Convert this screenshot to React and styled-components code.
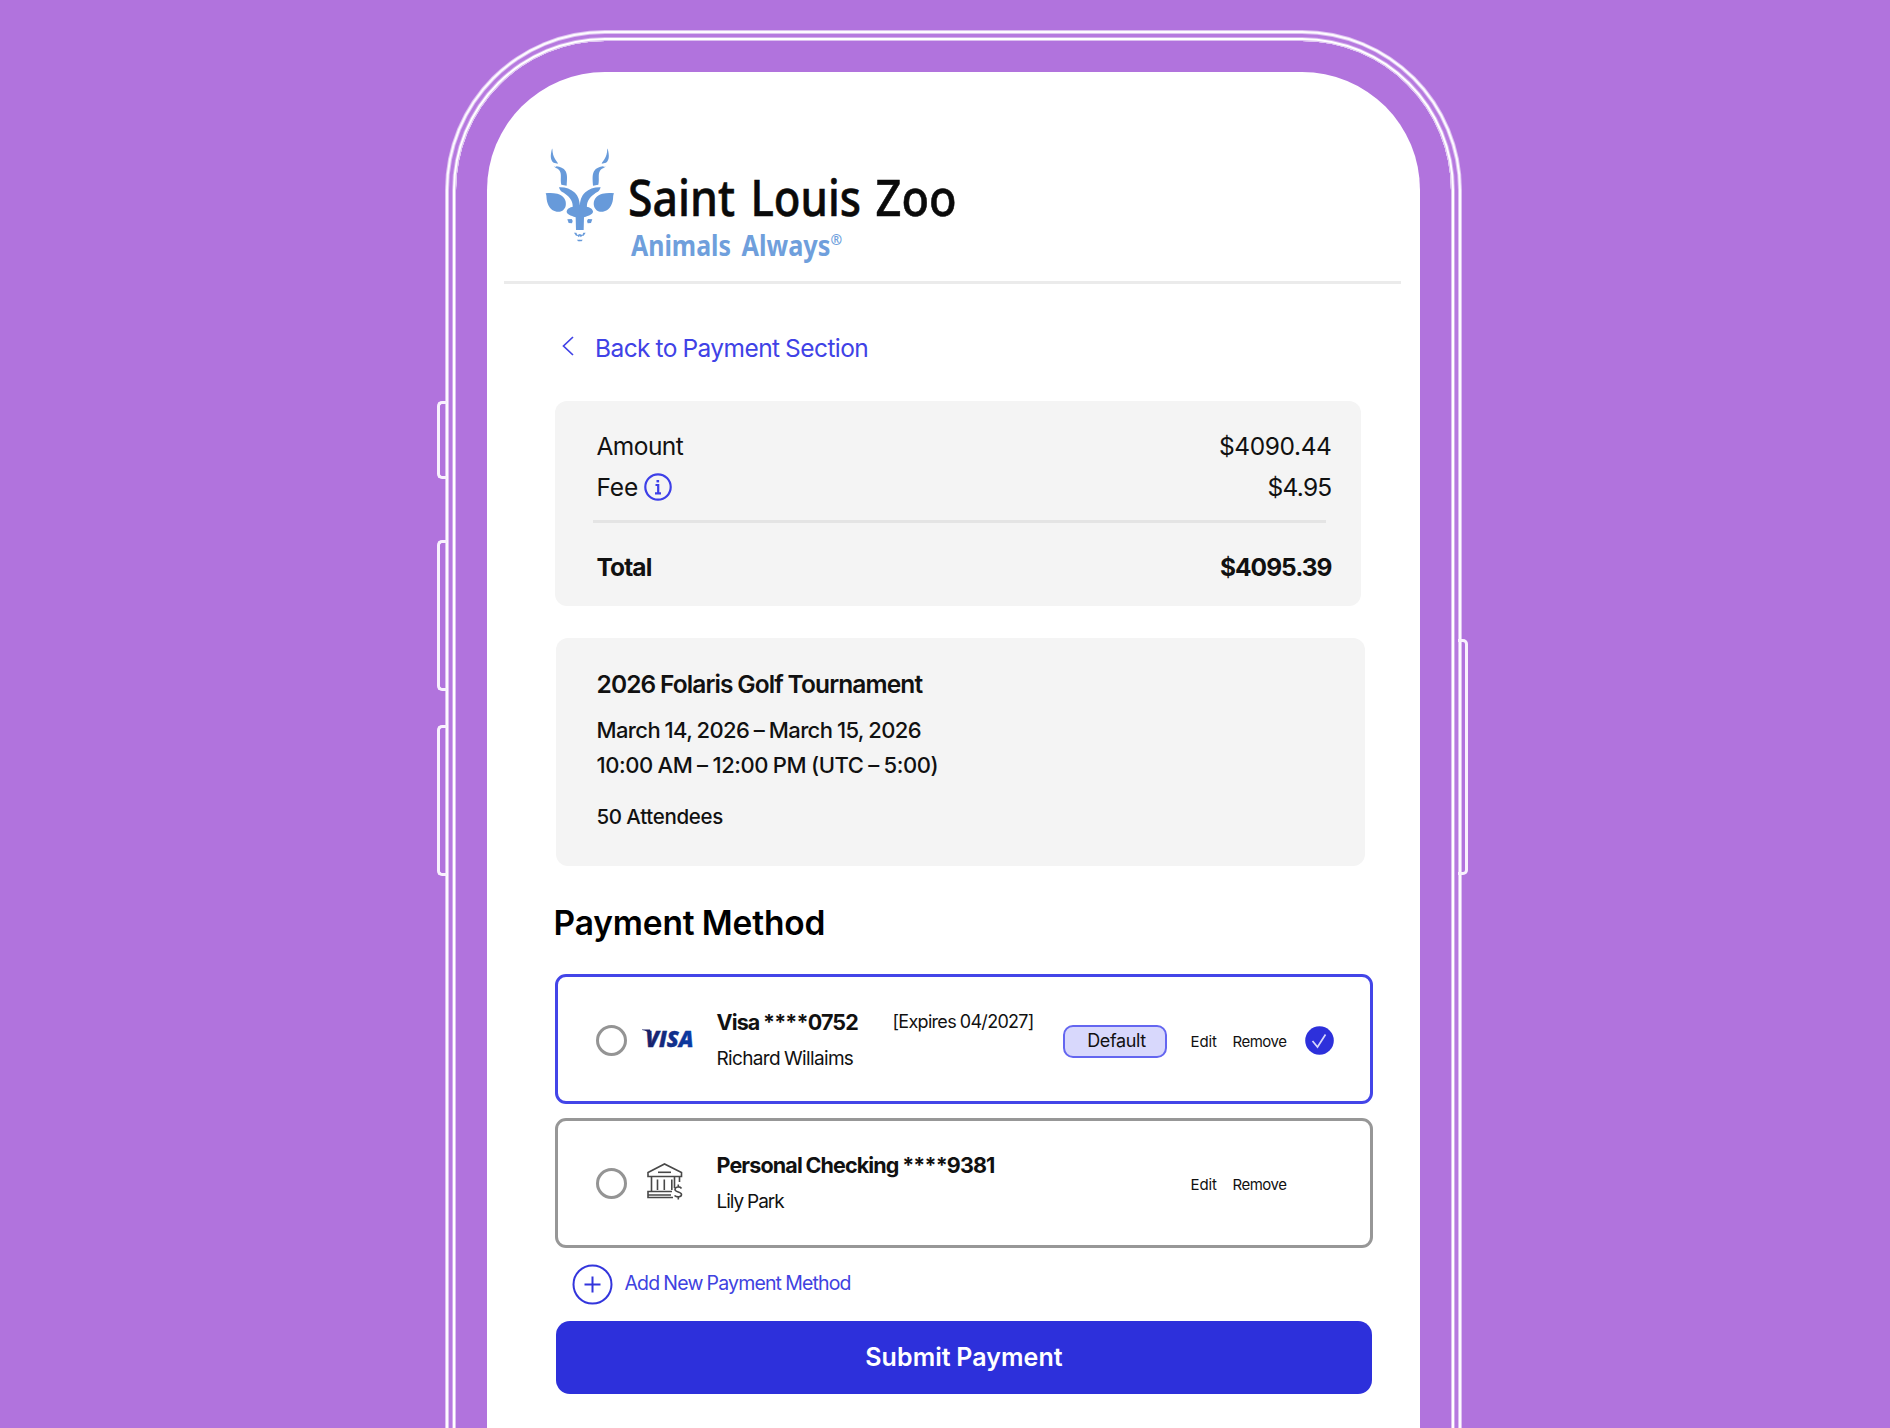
import React from "react"
import styled, { createGlobalStyle, css } from "styled-components"

const GlobalStyle = createGlobalStyle`
  * {
    box-sizing: border-box;
  }
  body {
    margin: 0;
    background: #b173dd;
    font-family: Inter, "Liberation Sans", sans-serif;
    color: #111;
  }
`
const Page = styled.div`
  height: 1428px;
  overflow: hidden;
  padding: 41px 0 0 456px;
`
const Device = styled.div`
  position: relative;
  width: 995px;
  height: 1387px;
  padding: 31px 31px 0 30.5px;
  border-radius: 149px 149px 0 0;
  box-shadow: 0 0 0 1px #dcc0f0, 0 0 0 3px #fff, 0 0 0 4px #d3aeec,
    0 0 0 7px #b679df, 0 0 0 8px #dcc0f0, 0 0 0 10px #fdfaff,
    0 0 0 11px #dcc0f0;
`
const SideButton = styled.div`
  position: absolute;
  top: ${props => props.top}px;
  height: ${props => props.height}px;
  width: 10px;
  border: 3.5px solid #f8f1fd;

  ${props =>
    props.right
      ? css`
          right: -17px;
          border-left: 0;
          border-radius: 0 5px 5px 0;
        `
      : css`
          left: -19px;
          border-right: 0;
          border-radius: 5px 0 0 5px;
        `}
`
const Screen = styled.div`
  height: 100%;
  background: white;
  border-radius: 118px 118px 0 0;
`
const Header = styled.div`
  height: 212px;
  margin: 0 19px 0 17px;
  padding: 76px 0 0 41.5px;
  border-bottom: 3px solid #ebebeb;

  svg {
    display: block;
    overflow: visible;
  }
`
const Content = styled.div`
  padding: 43px 0 0 68px;
`
const Text = styled.span`
  display: block;
  white-space: nowrap;
  font-size: ${props => props.size}px;
  font-weight: ${props => props.weight || 400};
  letter-spacing: ${props => props.spacing || 0}px;
  word-spacing: -0.03em;
  line-height: ${props => props.line || 36}px;
`
const BackLink = styled.div`
  display: flex;
  align-items: center;
  height: 41px;
  padding-left: 7.5px;
  color: #4042e6;

  svg {
    margin: -4px 21px 0 0;
  }
`
const Summary = styled.div`
  width: 806px;
  height: 205px;
  margin-top: 33px;
  padding: 24px 29px 0 42px;
  border-radius: 12px;
  background: #f4f4f4;
`
const SummaryRow = styled.div`
  display: flex;
  justify-content: space-between;
  align-items: center;
  height: 41.6px;
`
const SummaryLabel = styled.div`
  display: flex;
  align-items: center;
  gap: 6px;
`
const Rule = styled.div`
  height: 3px;
  margin: 12px 6px 23px -4px;
  background: #e4e4e4;
`
const EventCard = styled.div`
  width: 809px;
  height: 228px;
  margin: 32px 0 0 1.5px;
  padding: 28px 40.5px 0;
  border-radius: 12px;
  background: #f4f4f4;
`
const EventDates = styled.div`
  margin: 11px 0 19px;
`
const Heading = styled.h2`
  margin: 35px 0 29px -1px;
  font-size: inherit;
  color: #000;
`
const Method = styled.div`
  display: grid;
  grid-template-columns: 46px 75px 346px 128px 42px 72px 29px;
  align-items: center;
  width: 818.5px;
  height: 130px;
  margin-bottom: 13.5px;
  padding: 2px 0 0 38px;
  border: 3px solid ${props => (props.selected ? "#4345e8" : "#979797")};
  border-radius: 11px;
`
const Radio = styled.div`
  width: 31px;
  height: 31px;
  border: 3px solid #949494;
  border-radius: 50%;
`
const MethodLogo = styled.div`
  padding-bottom: 4px;

  svg {
    display: block;
    overflow: visible;
  }
`
const MethodLine = styled.div`
  display: flex;
  height: 37px;
  align-items: center;
`
const MethodName = styled.div`
  min-width: 176px;
`
const Badge = styled.div`
  display: flex;
  justify-content: center;
  align-items: center;
  width: 104px;
  height: 33px;
  margin-top: 2px;
  padding-left: 4px;
  border: 2px solid #6466f0;
  border-radius: 10px;
  background: #d8d8fc;
`
const Actions = styled.div`
  padding-top: 3.5px;
`
const AddMethod = styled.div`
  display: flex;
  align-items: center;
  gap: 12px;
  height: 41px;
  margin-top: 16px;
  padding-left: 17px;
  color: #4042e0;

  span {
    margin-top: -3px;
  }
`
const Submit = styled.button`
  display: flex;
  justify-content: center;
  align-items: center;
  width: 816px;
  height: 73px;
  margin: 16px 0 0 1.5px;
  border: 0;
  border-radius: 14px;
  background: #2d30db;
  color: white;
  font-family: inherit;
`

const HalfHead = () => (
  <g>
    <path d="M66 56C61 75 60 90 71 98L84 101C80 89 68 86 67 56Z" />
    <path d="M72 108C76 116 82 113 89 122C96 134 90 148 94 164L110 167C111 150 113 135 107 124C101 114 90 110 80 109L76 111Z" />
    <path d="M87 172C105 171 122 177 133 187C146 199 148 212 150 228L150 238L128 236C130 215 122 203 105 191C98 187 90 184 87 172Z" />
    <path d="M47 190C58 189 70 189 82 191C100 195 111 210 107 228C103 242 92 247 80 245C62 242 53 228 50 208C49 200 50 196 47 190Z" />
    <path d="M150 226L136 229C122 231 112 235 110 244C109 253 122 257 137 262L138 300H150Z" />
    <path d="M112 268L125 267L128 273L126 280L116 279Z" />
    <path d="M132 308H139L142 315L150 312V316L147 322L142 317H138Z" />
    <path d="M141 329H150V334H144Z" />
  </g>
)

const Logo = () => (
  <svg width="414" height="120" viewBox="0 0 414 120">
    <g fill="#679ada" transform="scale(0.3333) translate(-45 -54)">
      <HalfHead />
      <g transform="translate(299 0) scale(-1 1)">
        <HalfHead />
      </g>
    </g>
    <g fontFamily="'Noto Sans', sans-serif">
      <g fontSize="51.5" fontWeight="500" fill="#0a0a0a" stroke="#0a0a0a" strokeWidth="0.6">
        <text x="83" y="68" textLength="107" lengthAdjust="spacingAndGlyphs">Saint</text>
        <text x="205.500" y="68" textLength="110.500" lengthAdjust="spacingAndGlyphs">Louis</text>
        <text x="330.500" y="68" textLength="81" lengthAdjust="spacingAndGlyphs">Zoo</text>
      </g>
      <g fill="#6f9fdc" fontWeight="700">
        <text x="86" y="107.500" fontSize="28" textLength="100" lengthAdjust="spacingAndGlyphs">Animals</text>
        <text x="196.500" y="107.500" fontSize="28" textLength="89" lengthAdjust="spacingAndGlyphs">Always</text>
        <text x="285.500" y="97" fontSize="14">®</text>
      </g>
    </g>
  </svg>
)

const Chevron = () => (
  <svg width="12" height="20" viewBox="0 0 12 20" fill="none" stroke="currentColor" strokeWidth="1.7">
    <path d="M11 1L1.500 10L11 19" />
  </svg>
)

const InfoIcon = () => (
  <svg width="28" height="28" viewBox="0 0 28 28" fill="none" stroke="#3d3fe8" strokeWidth="2.200">
    <circle cx="14" cy="14" r="12.700" />
    <path d="M11.500 12H14.200V20M11 20.300H17" />
    <path d="M13.800 7V9.400" strokeWidth="2.600" />
  </svg>
)

const VisaLogo = () => (
  <svg width="54" height="22" viewBox="0 0 54 22">
    <defs>
      <linearGradient id="visa" x1="0" x2="1" y1="0" y2="0">
        <stop offset="0" stopColor="#1a1f66" />
        <stop offset="1" stopColor="#0a3ca8" />
      </linearGradient>
    </defs>
    <path d="M0 2.500H8L9.500 8C6.500 5 3.500 3.500 0 3Z" fill="#1a1f66" />
    <text
      x="3.500"
      y="19.500"
      fontFamily="'Open Sans', sans-serif"
      fontSize="23"
      fontStyle="italic"
      fontWeight="800"
      fill="url(#visa)"
      stroke="url(#visa)"
      strokeWidth="0.4"
      textLength="48"
      lengthAdjust="spacingAndGlyphs"
    >
      VISA
    </text>
  </svg>
)

const BankIcon = () => (
  <svg width="41" height="37" viewBox="-5 0 41 37" fill="none" stroke="#484848" strokeWidth="1.600">
    <path d="M1 13.500V9.500L17.500 1L34.500 9.500V13.500Z" />
    <path d="M11 9.300H24" />
    <path d="M4.500 14V28M10.500 16.500V27M17.300 16.500V27M24.800 16.500V27M27.500 14V25M32.500 14V19" />
    <path d="M25 28.500H1V34.500H26M1 32H24" />
    <path d="M34.500 25.500C33 23 28 23.500 28 26.500C28 29.500 34.500 28.500 34.500 31.500C34.500 34.500 29.500 34.500 27.500 32.500M31.300 21.500V24.500M31.300 33.500V36.500" />
  </svg>
)

const CheckIcon = () => (
  <svg width="29" height="29" viewBox="0 0 29 29" fill="none">
    <circle cx="14.500" cy="14.500" r="14.300" fill="#2d30db" />
    <path d="M7.500 15L12.500 21L20.500 8.500" stroke="#d8d8fc" strokeWidth="1.700" />
  </svg>
)

const PlusIcon = () => (
  <svg width="41" height="41" viewBox="0 0 41 41" fill="none" stroke="#3335dc" strokeWidth="2">
    <circle cx="20.500" cy="20.500" r="19" />
    <path d="M20.500 12.500V28.500M12.500 20.500H28.500" />
  </svg>
)

const PaymentMethod = props => (
  <Method selected={props.selected}>
    <Radio />
    <MethodLogo>{props.logo}</MethodLogo>
    <div>
      <MethodLine>
        <MethodName>
          <Text size={21.5} weight={700} spacing={-0.86}>{props.name}</Text>
        </MethodName>
        {props.expires && <Text size={18} spacing={-0.7}>{props.expires}</Text>}
      </MethodLine>
      <MethodLine>
        <Text size={19} spacing={props.ownerSpacing}>{props.owner}</Text>
      </MethodLine>
    </div>
    <div>
      {props.selected && (
        <Badge>
          <Text size={18} spacing={-0.35}>Default</Text>
        </Badge>
      )}
    </div>
    <Actions>
      <Text size={15} spacing={-0.1}>Edit</Text>
    </Actions>
    <Actions>
      <Text size={15} spacing={-0.5}>Remove</Text>
    </Actions>
    {props.selected && <CheckIcon />}
  </Method>
)

const App = () => (
  <Page>
    <GlobalStyle />
    <Device>
      <SideButton top={360} height={78} />
      <SideButton top={499} height={151} />
      <SideButton top={684} height={151} />
      <SideButton top={598} height={236} right />
      <Screen>
        <Header>
          <Logo />
        </Header>
        <Content>
          <BackLink>
            <Chevron />
            <Text size={24.5} spacing={-0.57}>Back to Payment Section</Text>
          </BackLink>
          <Summary>
            <SummaryRow>
              <Text size={24.5} spacing={-0.55}>Amount</Text>
              <Text size={24.5} spacing={-0.4}>$4090.44</Text>
            </SummaryRow>
            <SummaryRow>
              <SummaryLabel>
                <Text size={24.5} spacing={-0.2}>Fee</Text>
                <InfoIcon />
              </SummaryLabel>
              <Text size={24.5} spacing={-0.75}>$4.95</Text>
            </SummaryRow>
            <Rule />
            <SummaryRow>
              <Text size={24.5} weight={700} spacing={-0.9}>Total</Text>
              <Text size={24.5} weight={700} spacing={-1}>$4095.39</Text>
            </SummaryRow>
          </Summary>
          <EventCard>
            <Text size={24.5} weight={600} spacing={-0.87}>2026 Folaris Golf Tournament</Text>
            <EventDates>
              <Text size={22} weight={500} line={35} spacing={-0.62}>March 14, 2026 – March 15, 2026</Text>
              <Text size={22} weight={500} line={35} spacing={-0.43}>10:00 AM – 12:00 PM (UTC – 5:00)</Text>
            </EventDates>
            <Text size={20.5} weight={500} line={30} spacing={-0.3}>50 Attendees</Text>
          </EventCard>
          <Heading>
            <Text size={33.5} weight={600} line={44} spacing={-0.15}>Payment Method</Text>
          </Heading>
          <PaymentMethod
            selected
            logo={<VisaLogo />}
            name="Visa ****0752"
            expires="[Expires 04/2027]"
            owner="Richard Willaims"
            ownerSpacing={-0.66}
          />
          <PaymentMethod
            logo={<BankIcon />}
            name="Personal Checking ****9381"
            owner="Lily Park"
            ownerSpacing={-1}
          />
          <AddMethod>
            <PlusIcon />
            <Text size={19.5} spacing={-0.84}>Add New Payment Method</Text>
          </AddMethod>
          <Submit>
            <Text size={25} weight={600} spacing={0.06}>Submit Payment</Text>
          </Submit>
        </Content>
      </Screen>
    </Device>
  </Page>
)
export default App
